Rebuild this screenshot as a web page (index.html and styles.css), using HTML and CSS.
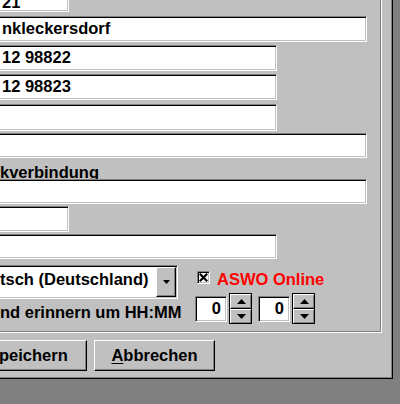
FILE: index.html
```html
<!DOCTYPE html>
<html lang="de">
<head>
<meta charset="utf-8">
<title>Dialog</title>
<link rel="stylesheet" href="styles.css">
</head>
<body>
<div class="dialog">
  <div class="group">
    <div class="field f1 w-short">21</div>
    <div class="field f2 w-wide">nkleckersdorf</div>
    <div class="field f3 w-mid">12 98822</div>
    <div class="field f4 w-mid">12 98823</div>
    <div class="field f5 w-mid"></div>
    <div class="field f6 w-wide"></div>
    <div class="label-row">kverbindung</div>
    <div class="field f7 w-wide"></div>
    <div class="field f8 w-short"></div>
    <div class="field f9 w-mid"></div>
    <div class="row row-lang">
      <div class="combo">
        <span class="combo-text">tsch (Deutschland)</span>
        <span class="combo-btn"><svg width="7" height="4" viewBox="0 0 7 4"><polygon points="0,0 7,0 3.5,4" fill="#000"/></svg></span>
      </div>
      <span class="check"><svg width="9" height="9" viewBox="0 0 9 9"><path d="M0.8 0.8 L8.2 8.2 M8.2 0.8 L0.8 8.2" stroke="#000" stroke-width="2.2"/></svg></span>
      <span class="check-label">ASWO Online</span>
    </div>
    <div class="row row-time">
      <span class="time-label">nd erinnern um HH:MM</span>
      <div class="edit">0</div>
      <div class="spin">
        <div class="spin-btn up"><svg width="9" height="5" viewBox="0 0 9 5"><polygon points="4.5,0 9,5 0,5" fill="#000"/></svg></div>
        <div class="spin-btn down"><svg width="9" height="5" viewBox="0 0 9 5"><polygon points="0,0 9,0 4.5,5" fill="#000"/></svg></div>
      </div>
      <div class="edit edit2">0</div>
      <div class="spin">
        <div class="spin-btn up"><svg width="9" height="5" viewBox="0 0 9 5"><polygon points="4.5,0 9,5 0,5" fill="#000"/></svg></div>
        <div class="spin-btn down"><svg width="9" height="5" viewBox="0 0 9 5"><polygon points="0,0 9,0 4.5,5" fill="#000"/></svg></div>
      </div>
    </div>
  </div>
  <div class="buttons">
    <div class="btn btn-save">peichern</div>
    <div class="btn btn-cancel"><u>A</u>bbrechen</div>
  </div>
</div>
</body>
</html>
```

FILE: styles.css
```css
html, body {
  margin: 0;
  padding: 0;
  background: #808080;
}
body {
  font-family: "Liberation Sans", Arial, sans-serif;
  font-weight: bold;
  font-size: 16.5px;
  color: #000;
  overflow: hidden;
}
.dialog {
  box-sizing: border-box;
  width: 393px;
  height: 379px;
  background: #c0c0c0;
  border-right: 1px solid #000;
  border-bottom: 1px solid #000;
  box-shadow: inset -1px -1px 0 #808080;
  display: flex;
  flex-direction: column;
}
.group {
  box-sizing: border-box;
  width: 382px;
  height: 333px;
  flex: none;
  border-right: 1px solid #fff;
  border-bottom: 1px solid #fff;
  box-shadow: inset -1px -1px 0 #808080;
  display: flex;
  flex-direction: column;
}
.field {
  box-sizing: border-box;
  flex: none;
  margin-left: -4px;
  height: 26px;
  background: #fff;
  border: 1px solid;
  border-color: #808080 #fff #fff #808080;
  box-shadow: inset 1px 1px 0 #000, inset -1px -1px 0 #c0c0c0;
  padding-left: 5px;
  line-height: 22px;
  white-space: nowrap;
  overflow: hidden;
}
.w-short { width: 73px; }
.w-mid { width: 281px; }
.w-wide { width: 371px; }
.f1 { margin-top: -14px; line-height: 30px; }
.f2 { margin-top: 4px; }
.f3 { margin-top: 3px; }
.f4 { margin-top: 3px; }
.f5 { margin-top: 4px; height: 27px; }
.f6 { margin-top: 2px; height: 25px; }
.label-row {
  flex: none;
  height: 21px;
  line-height: 28px;
  white-space: nowrap;
  overflow: hidden;
}
.f7 { height: 25px; }
.f8 { margin-top: 2px; }
.f9 { margin-top: 2px; height: 25px; }
.row {
  display: flex;
  align-items: flex-start;
  flex: none;
}
.row-lang {
  margin-top: 6px;
  height: 28px;
}
.combo {
  box-sizing: border-box;
  flex: none;
  margin-left: -4px;
  width: 182px;
  height: 34px;
  background: #fff;
  border: 1px solid;
  border-color: #808080 #fff #fff #808080;
  box-shadow: inset 1px 1px 0 #000, inset -1px -1px 0 #c0c0c0;
  display: flex;
  position: relative;
  z-index: 1;
}
.combo-text {
  flex: 1;
  padding-left: 3px;
  line-height: 26px;
  white-space: nowrap;
  overflow: hidden;
}
.combo-btn {
  box-sizing: border-box;
  flex: none;
  width: 20px;
  height: 30px;
  margin: 1px 1px 1px 0;
  background: #c0c0c0;
  border-top: 1px solid #fff;
  border-left: 1px solid #fff;
  border-right: 1px solid #000;
  border-bottom: 1px solid #000;
  box-shadow: inset -1px -1px 0 #808080;
  display: flex;
  align-items: center;
  justify-content: center;
}
.combo-btn svg { display: block; }
.check {
  box-sizing: border-box;
  flex: none;
  margin-left: 19px;
  margin-top: 6px;
  width: 13px;
  height: 13px;
  background: #fff;
  border: 1px solid;
  border-color: #808080 #fff #fff #808080;
  box-shadow: inset 1px 1px 0 #000, inset -1px -1px 0 #c0c0c0;
  display: flex;
  align-items: center;
  justify-content: center;
}
.check svg { display: block; }
.check-label {
  margin-left: 7px;
  margin-top: 5px;
  line-height: 19px;
  color: #ff0000;
  white-space: nowrap;
}
.row-time {
  height: 31px;
}
.time-label {
  flex: none;
  width: 195px;
  margin-top: 10px;
  line-height: 19px;
  white-space: nowrap;
}
.edit {
  box-sizing: border-box;
  flex: none;
  width: 32px;
  height: 26px;
  margin-top: 3px;
  background: #fff;
  border: 1px solid;
  border-color: #808080 #fff #fff #808080;
  box-shadow: inset 1px 1px 0 #000, inset -1px -1px 0 #c0c0c0;
  text-align: right;
  padding-right: 5px;
  line-height: 22px;
}
.edit2 { margin-left: 6px; }
.spin {
  box-sizing: border-box;
  flex: none;
  width: 23px;
  height: 31px;
  margin-left: 2px;
  border: 1px solid #000;
  display: flex;
  flex-direction: column;
}
.spin-btn {
  box-sizing: border-box;
  flex: 1;
  background: #c0c0c0;
  border-top: 1px solid #fff;
  border-left: 1px solid #fff;
  box-shadow: inset -1px -1px 0 #808080;
  display: flex;
  align-items: center;
  justify-content: center;
}
.spin-btn.up { border-bottom: 1px solid #000; }
.spin-btn svg { display: block; }
.buttons {
  display: flex;
  flex: none;
  margin-top: 7px;
}
.btn {
  box-sizing: border-box;
  flex: none;
  width: 121px;
  height: 31px;
  background: #c0c0c0;
  border: 1px solid;
  border-color: #fff #000 #000 #fff;
  box-shadow: inset -1px -1px 0 #808080;
  line-height: 29px;
  text-align: center;
  white-space: nowrap;
}
.btn-save {
  margin-left: -34px;
  text-align: left;
  padding-left: 32px;
}
.btn-cancel {
  margin-left: 7px;
}
.btn u {
  text-decoration: underline;
  text-underline-offset: 2px;
}
```
